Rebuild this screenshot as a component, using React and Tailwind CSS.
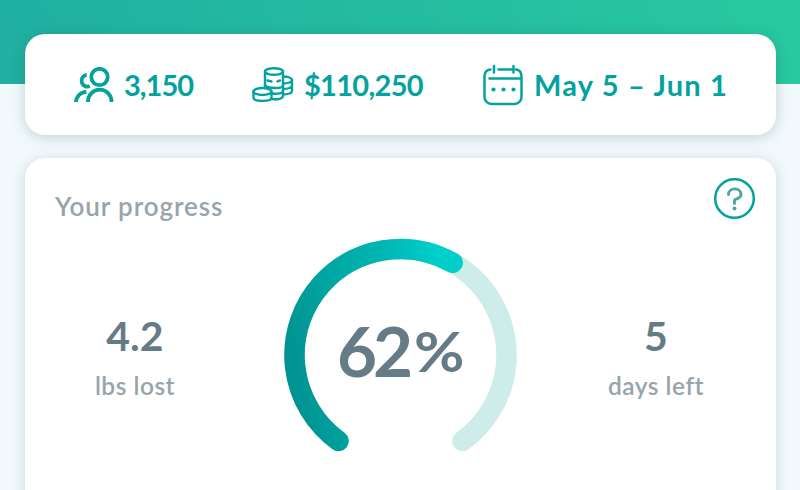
import React from 'react';

const PROGRESS = { percent: 62, lost: '4.2', days: '5' };

function PeopleIcon() {
  return (
    <svg width="40" height="36" viewBox="0 0 40 36" fill="none" stroke="#03a29f" strokeWidth="3.8">
      <circle cx="25.5" cy="10" r="8.2" />
      <path d="M14 35v-.6a11.5 11.5 0 0 1 23.500 0v.6" />
      <path d="M12.700 7.800a5.900 5.900 0 1 0 3 11.300" />
      <path d="M2 35c.2-5.400 4.500-10 10.400-10" />
    </svg>
  );
}

function CoinsIcon() {
  return (
    <svg width="42" height="36" viewBox="0 0 42 36" fill="none" stroke="#03a29f" strokeWidth="2.400" strokeLinecap="round">
      <ellipse cx="22" cy="4.5" rx="9" ry="3.300" />
      <path d="M13 4.500v15M31 4.500v24" />
      <path d="M15.500 13.500l4 1M25.500 14.300l2.500-.8M13 18.500c4 3.300 18 3.300 18 0M20.500 26.500c5 .8 10.500-.3 10.500-2.500M20 32c5 .8 11-.3 11-3" />
      <path d="M31 9.500c5 0 9 1.500 9 3.500s-4 3.500-9 3.500M40 13v11c0 2-4 3.500-9 3.500M40 18.500c0 2-4 3.500-9 3.500" />
      <ellipse cx="10.500" cy="24.500" rx="9" ry="3.500" />
      <path d="M1.500 24.500v6c0 4.500 18 4.500 18 0v-6" />
    </svg>
  );
}

function CalendarIcon() {
  return (
    <svg width="40" height="42" viewBox="0 0 40 42" fill="none" stroke="#03a29f" strokeWidth="2.5" strokeLinecap="round">
      <path d="M7.500 5.500c-4 .5-6 3-6 7V33a7 7 0 0 0 7 7h23a7 7 0 0 0 7-7V12.500c0-4-2-6.500-5.500-7M15.500 5.500h14.500M11 2v6.500M30.500 2v6.500M6.500 14.500h31.500" />
      <g fill="#03a29f" stroke="none">
        <circle cx="10.500" cy="25.500" r="2.100" />
        <circle cx="20.500" cy="25.500" r="2.100" />
        <circle cx="30.500" cy="25.500" r="2.100" />
      </g>
    </svg>
  );
}

const ARC = 'M54.5 203a106 106 0 1 1 124 0';

function Gauge() {
  return (
    <svg className="absolute inset-0" width="233" height="216" viewBox="0 0 233 216" fill="none" strokeWidth="20.500" strokeLinecap="round">
      <defs>
        <linearGradient id="progress" gradientUnits="userSpaceOnUse" x1="8" y1="130" x2="172" y2="98">
          <stop offset="0" stopColor="#009391" />
          <stop offset=".3" stopColor="#00a5a2" />
          <stop offset=".65" stopColor="#00b5b1" />
          <stop offset="1" stopColor="#00cfcb" />
        </linearGradient>
      </defs>
      <path d={ARC} stroke="#cdecea" />
      <path d={ARC} stroke="url(#progress)" pathLength="100" strokeDasharray="60.2 100" />
    </svg>
  );
}

function Metric({ value, label, className }) {
  return (
    <div className={`flex flex-col items-center whitespace-nowrap ${className}`}>
      <div className="text-[41px] leading-[50px] font-bold text-[#657c87]">{value}</div>
      <div className="mt-[10px] text-[24.5px] leading-[30px] font-semibold tracking-[0.5px] text-[#98a4ac]">{label}</div>
    </div>
  );
}

export default function App() {
  return (
    <main className="h-[490px] w-[800px] overflow-hidden bg-[#f1f9fc] bg-[linear-gradient(75deg,#20afa2,#28c9a0)] bg-[length:100%_84px] bg-no-repeat pr-[24px] pl-[25px] pt-[34px] font-['Lato',sans-serif]">
      <section className="flex h-[101px] items-center rounded-[20px] bg-white pl-[49px] font-bold text-[#03a29f] shadow-[0_2px_14px_rgba(30,70,65,0.22)]">
        <div className="flex w-[178px] items-center gap-[10px] text-[29px] tracking-[-1px]">
          <PeopleIcon />
          <span>3,150</span>
        </div>
        <div className="flex w-[231px] items-center gap-[10px] text-[29px] tracking-[-0.7px]">
          <CoinsIcon />
          <span>$110,250</span>
        </div>
        <div className="flex items-center gap-[11px] whitespace-nowrap text-[29px] tracking-[1.2px]">
          <CalendarIcon />
          <span>May 5 – Jun 1</span>
        </div>
      </section>

      <section className="mt-[23px] h-[360px] rounded-[20px] bg-white shadow-[0_2px_14px_rgba(30,70,65,0.18)]">
        <div className="flex h-[80px] justify-between pl-[30px] pr-[20px] pt-[20px]">
          <h2 className="mt-[12px] text-[26px] leading-[32px] font-semibold tracking-[0.9px] text-[#98a4ac]">Your progress</h2>
          <svg width="42" height="42" viewBox="0 0 42 42" fill="none" stroke="#03a29f" strokeWidth="2.500">
            <circle cx="20.500" cy="20.500" r="19.300" />
            <path d="M14.500 16.500c.2-7.500 12.500-7.500 12.500 0 0 4.500-6.500 4.500-6.500 5.500v3.500" stroke="#4ba6a4" strokeWidth="2.900" strokeLinecap="round" />
            <circle cx="20.500" cy="30.500" r="1.900" fill="#4ba6a4" stroke="none" />
          </svg>
        </div>
        <div className="flex">
          <Metric value={PROGRESS.lost} label="lbs lost" className="ml-[10px] w-[200px] pt-[73px]" />
          <div className="relative ml-[49px] flex h-[214px] w-[233px] items-center justify-center gap-[5px] pt-[11px] text-[#657c87]">
            <Gauge />
            <span className="text-[69px] font-bold tracking-[-4px]">{PROGRESS.percent}</span>
            <span className="text-[56px] font-bold tracking-[4px]">
              <span className="inline-block origin-left scale-x-[1.1]">%</span>
            </span>
          </div>
          <Metric value={PROGRESS.days} label="days left" className="ml-[39px] w-[200px] pt-[73px]" />
        </div>
      </section>
    </main>
  );
}
